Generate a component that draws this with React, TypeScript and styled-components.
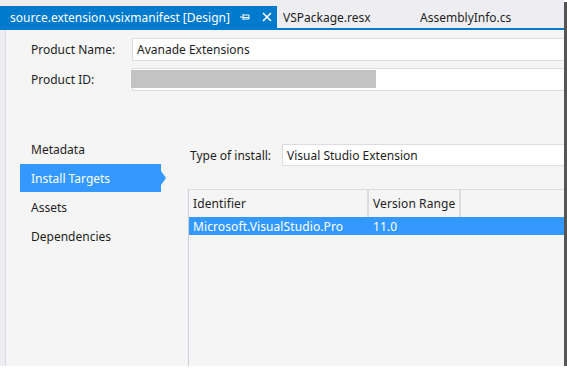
import React from "react";
import styled, { createGlobalStyle } from "styled-components";

const Global = createGlobalStyle`
  html, body { margin: 0; padding: 0; background: #ffffff; }
  body { font-family: "Noto Sans", "Open Sans", sans-serif; font-size: 12px; color: #1e1e1e; }
  * { box-sizing: border-box; }
`;

const Window = styled.div`
  width: 564px;
  height: 366px;
  background: #eeeef2;
  box-shadow: 3px 2px 0 #555555;
  display: flex;
  flex-direction: column;
  overflow: hidden;
`;

const TabStrip = styled.div`
  height: 30px;
  display: flex;
  align-items: flex-end;
  border-bottom: 2px solid #007acc;
  flex-shrink: 0;
`;

const Tab = styled.div<{ $active?: boolean; $w: number }>`
  width: ${(p) => p.$w}px;
  height: 22px;
  display: flex;
  align-items: center;
  padding-left: ${(p) => (p.$active ? 10 : 6)}px;
  background: ${(p) => (p.$active ? "#007acc" : "transparent")};
  color: ${(p) => (p.$active ? "#ffffff" : "#1e1e1e")};
  white-space: nowrap;
  flex-shrink: 0;
`;

const TabTitle = styled.span`
  flex: 1;
`;

const TabIcon = styled.svg<{ $mr: number }>`
  display: block;
  margin-right: ${(p) => p.$mr}px;
  flex-shrink: 0;
`;

const Body = styled.div`
  flex: 1;
  display: flex;
  padding-left: 5px;
`;

const Content = styled.div`
  flex: 1;
  background: #f5f5f5;
  border-left: 1px solid #dcdce5;
  display: flex;
  flex-direction: column;
  padding-top: 8px;
`;

const FieldRow = styled.div<{ $mt?: number }>`
  display: flex;
  align-items: center;
  height: 23px;
  margin-top: ${(p) => p.$mt ?? 0}px;
  padding-left: 25px;
`;

const Label = styled.div<{ $w: number }>`
  width: ${(p) => p.$w}px;
  flex-shrink: 0;
  white-space: nowrap;
`;

const Input = styled.div`
  flex: 1;
  height: 100%;
  background: #ffffff;
  border: 1px solid #dcdce2;
  border-right: none;
  display: flex;
  align-items: center;
  padding-left: 4px;
  position: relative;
  white-space: nowrap;
`;

const Redaction = styled.div`
  position: absolute;
  left: -2px;
  top: 1px;
  width: 245px;
  height: 18px;
  background: #c3c3c3;
`;

const Lower = styled.div`
  flex: 1;
  display: flex;
  margin-top: 44px;
`;

const Nav = styled.div`
  width: 146px;
  margin-left: 14px;
  display: flex;
  flex-direction: column;
  gap: 1px;
  flex-shrink: 0;
`;

const NavItem = styled.div<{ $active?: boolean }>`
  height: 28px;
  width: 141px;
  display: flex;
  align-items: center;
  padding-left: 11px;
  position: relative;
  background: ${(p) => (p.$active ? "#3399ff" : "transparent")};
  color: ${(p) => (p.$active ? "#ffffff" : "#1e1e1e")};
  ${(p) =>
    p.$active
      ? `&::after {
    content: "";
    position: absolute;
    right: -5px;
    top: 7px;
    border-top: 7px solid transparent;
    border-bottom: 7px solid transparent;
    border-left: 5px solid #3399ff;
  }`
      : ""}
`;

const Panel = styled.div`
  flex: 1;
  margin-left: 22px;
  padding-top: 9px;
  display: flex;
  flex-direction: column;
`;

const InstallRow = styled.div`
  display: flex;
  align-items: center;
  height: 22px;
  padding-left: 2px;
`;

const Table = styled.div`
  flex: 1;
  margin-top: 23px;
  border-left: 1px solid #cccedb;
  border-top: 1px solid #dcdce2;
  display: flex;
  flex-direction: column;
`;

const Row = styled.div<{ $selected?: boolean; $h: number }>`
  display: flex;
  height: ${(p) => p.$h}px;
  background: ${(p) => (p.$selected ? "#3399ff" : "transparent")};
  color: ${(p) => (p.$selected ? "#ffffff" : "#1e1e1e")};
`;

const Cell = styled.div<{ $w: number; $header?: boolean }>`
  width: ${(p) => p.$w}px;
  flex-shrink: 0;
  display: flex;
  align-items: center;
  padding-left: 4px;
  white-space: nowrap;
  letter-spacing: 0.1px;
  border-right: ${(p) => (p.$header ? "2px solid #dcdce2" : "none")};
`;

export default function App() {
  return (
    <>
      <Global />
      <Window>
        <TabStrip>
          <Tab $active $w={277}>
            <TabTitle>source.extension.vsixmanifest [Design]</TabTitle>
            <TabIcon $mr={12} width="10" height="8" viewBox="0 0 10 8">
              <path d="M0 4H3M3 1V7M3 2H9V6H3M3 4.5H9" stroke="#ffffff" strokeWidth="1" fill="none" />
            </TabIcon>
            <TabIcon $mr={5} width="10" height="10" viewBox="0 0 10 10">
              <path d="M1 1L9 9M9 1L1 9" stroke="#ffffff" strokeWidth="1.6" fill="none" />
            </TabIcon>
          </Tab>
          <Tab $w={137}>VSPackage.resx</Tab>
          <Tab $w={120}>AssemblyInfo.cs</Tab>
        </TabStrip>
        <Body>
          <Content>
            <FieldRow>
              <Label $w={101}>Product Name:</Label>
              <Input>Avanade Extensions</Input>
            </FieldRow>
            <FieldRow $mt={7}>
              <Label $w={101}>Product ID:</Label>
              <Input>
                <Redaction />
              </Input>
            </FieldRow>
            <Lower>
              <Nav>
                <NavItem>Metadata</NavItem>
                <NavItem $active>Install Targets</NavItem>
                <NavItem>Assets</NavItem>
                <NavItem>Dependencies</NavItem>
              </Nav>
              <Panel>
                <InstallRow>
                  <Label $w={92}>Type of install:</Label>
                  <Input>Visual Studio Extension</Input>
                </InstallRow>
                <Table>
                  <Row $h={27}>
                    <Cell $w={180} $header>Identifier</Cell>
                    <Cell $w={92} $header>Version Range</Cell>
                  </Row>
                  <Row $h={18} $selected>
                    <Cell $w={180}>Microsoft.VisualStudio.Pro</Cell>
                    <Cell $w={92}>11.0</Cell>
                  </Row>
                </Table>
              </Panel>
            </Lower>
          </Content>
        </Body>
      </Window>
    </>
  );
}
